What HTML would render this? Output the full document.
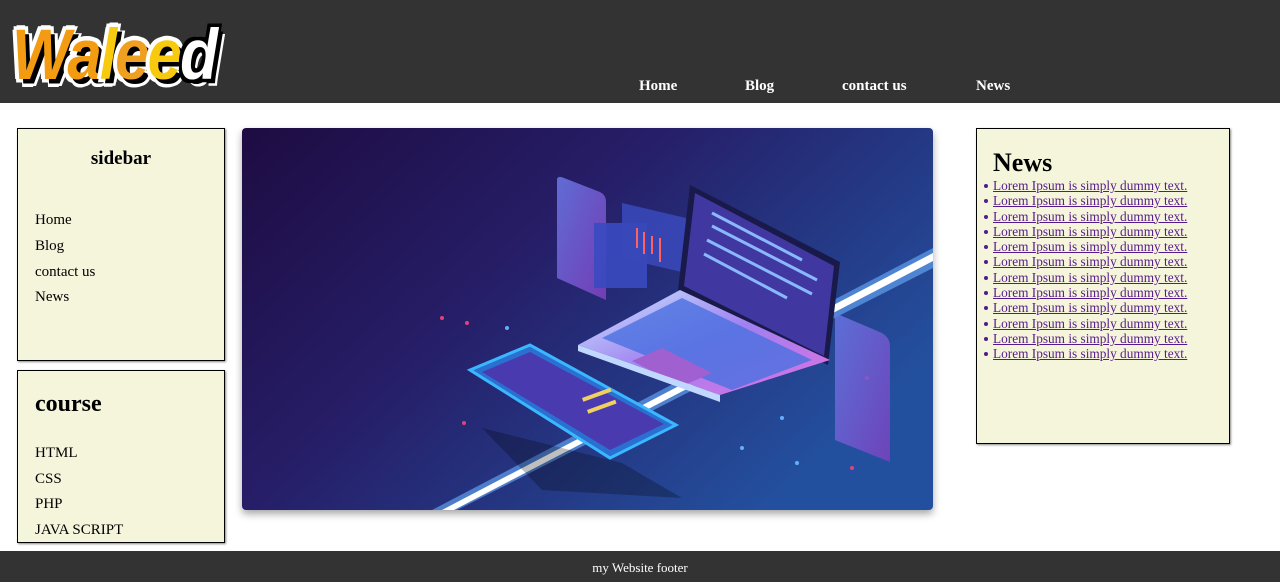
<!DOCTYPE html>
<html><head><meta charset="utf-8"><style>
*{margin:0;padding:0;box-sizing:border-box}
body{width:1280px;height:582px;position:relative;background:#fff;font-family:"Liberation Serif",serif;overflow:hidden}
.hdr{position:absolute;left:0;top:0;width:1280px;height:103px;background:#333}
.logo{position:absolute;left:12px;top:18px;font:900 62px/66px "Liberation Sans",sans-serif;letter-spacing:-2px;font-style:italic;transform:scaleY(1.15);transform-origin:0 0;white-space:nowrap}
.logo span{text-shadow:4px 4px 0 #000,-3px -3px 0 #fff,3px -3px 0 #fff,-3px 3px 0 #fff,6px 6px 0 #fff,0 -4px 0 #fff,-4px 0 0 #fff,7px 3px 0 #fff,3px 7px 0 #fff}
.nav a{position:absolute;top:78px;color:#fff;font-weight:bold;font-size:15px;text-decoration:none}
.box{position:absolute;background:#f5f5dc;border:1px solid #000;box-shadow:1px 1px 2px #888}
.box p{position:absolute;left:17px;font-size:15px;color:#000}
.img{position:absolute;left:242px;top:128px;width:691px;height:382px;border-radius:4px;overflow:hidden;box-shadow:0 4px 8px rgba(0,0,0,.35)}
ul{position:absolute;left:16px;top:49px;list-style:none}
li{font-size:13.3px;line-height:15.3px;color:#551a8b;text-decoration:underline;position:relative;white-space:nowrap}
li:before{content:"";position:absolute;left:-9px;top:6px;width:4px;height:4px;border-radius:50%;background:#551a8b}
.ftr{position:absolute;left:0;top:551px;width:1280px;height:31px;background:#333;color:#fff;font-size:13px;text-align:center;line-height:33px}
</style></head><body>
<div class="hdr">
<div class="logo"><span style="color:#f39c12">W</span><span style="color:#f39c12">a</span><span style="color:#f7c90f">l</span><span style="color:#f0a020">e</span><span style="color:#f7c90f">e</span><span style="color:#fff;text-shadow:4px 4px 0 #000,-3px -3px 0 #000,3px -3px 0 #000,-3px 3px 0 #000,6px 6px 0 #fff">d</span></div>
<div class="nav"><a style="left:639px">Home</a><a style="left:745px">Blog</a><a style="left:842px">contact us</a><a style="left:976px">News</a></div>
</div>
<div class="box" style="left:17px;top:128px;width:208px;height:233px">
<div style="position:absolute;left:0;width:100%;top:19px;text-align:center;font-weight:bold;font-size:19px">sidebar</div>
<p style="top:83px">Home</p><p style="top:109px">Blog</p><p style="top:135px">contact us</p><p style="top:160px">News</p>
</div>
<div class="box" style="left:17px;top:370px;width:208px;height:173px">
<div style="position:absolute;left:17px;top:20px;font-weight:bold;font-size:24px">course</div>
<p style="top:74px">HTML</p><p style="top:100px">CSS</p><p style="top:125px">PHP</p><p style="top:151px">JAVA SCRIPT</p>
</div>
<div class="img">
<svg width="691" height="382" viewBox="0 0 691 382">
<defs>
<linearGradient id="bg" x1="0" y1="0" x2="1" y2=".6"><stop offset="0" stop-color="#1e0c42"/><stop offset=".45" stop-color="#261e68"/><stop offset="1" stop-color="#23509e"/></linearGradient>
<linearGradient id="lp" x1="0" y1="0" x2="1" y2="1"><stop offset="0" stop-color="#c8e8ff"/><stop offset=".5" stop-color="#a080f0"/><stop offset="1" stop-color="#e070e0"/></linearGradient>
<linearGradient id="ph" x1="0" y1="0" x2="1" y2="1"><stop offset="0" stop-color="#6a7ae8"/><stop offset="1" stop-color="#8040c0"/></linearGradient>
</defs>
<rect width="691" height="382" fill="url(#bg)"/>
<path d="M190 382 L691 120 L691 140 L215 382Z" fill="#6ab0ff" opacity=".6"/>
<path d="M200 382 L691 125 L691 133 L212 382Z" fill="#fff"/>
<g fill="#e04080"><circle cx="200" cy="190" r="2"/><circle cx="225" cy="195" r="2"/><circle cx="222" cy="295" r="2"/><circle cx="330" cy="280" r="2"/><circle cx="625" cy="250" r="2"/><circle cx="610" cy="340" r="2"/></g>
<g fill="#60b0ff"><circle cx="265" cy="200" r="2"/><circle cx="500" cy="320" r="2"/><circle cx="540" cy="290" r="2"/><circle cx="555" cy="335" r="2"/></g>
<path d="M315 52 Q315 47 322 50 L358 64 Q364 67 364 74 L364 172 L315 150Z" fill="url(#ph)" opacity=".85"/>
<path d="M352 95 L405 95 L405 160 L352 160Z" fill="#3a4ac0" opacity=".9"/>
<path d="M380 75 L465 95 L465 150 L380 130Z" fill="#3848b8" opacity=".9"/>
<g stroke="#ff6060" stroke-width="2"><path d="M395 100 v20 M402 104 v22 M410 108 v18 M418 110 v24"/></g>
<path d="M448 57 L598 134 L586 237 L436 162Z" fill="#1a1a4a"/>
<path d="M453 65 L592 138 L582 228 L442 158Z" fill="#4038a0"/>
<g stroke="#8ab8ff" stroke-width="3"><path d="M470 85 L560 132 M470 98 L575 152 M465 112 L570 166 M462 126 L545 170"/></g>
<path d="M336 217 L438 162 L588 232 L478 267Z" fill="url(#lp)"/>
<path d="M360 210 L440 170 L570 232 L490 262Z" fill="#4a70e0" opacity=".8"/>
<path d="M390 233 L420 220 L470 245 L440 258Z" fill="#a060d0"/>
<path d="M336 217 L478 267 L478 274 L336 223Z" fill="#c0d8ff"/>
<path d="M593 185 L640 205 Q648 210 648 218 L648 334 L593 312Z" fill="url(#ph)" opacity=".8"/>
<path d="M240 300 L380 335 L440 370 L300 362Z" fill="#000" opacity=".25"/>
<path d="M228 242 L288 217 L434 297 L368 330Z" fill="#2a70d0" stroke="#3ab8ff" stroke-width="3"/>
<path d="M240 244 L288 224 L422 296 L368 322Z" fill="#4a3ab0"/>
<g fill="#f0d060"><rect x="340" y="270" width="30" height="4" transform="rotate(-20 340 270)"/><rect x="345" y="282" width="30" height="4" transform="rotate(-20 345 282)"/></g>
</svg>
</div>
<div class="box" style="left:976px;top:128px;width:254px;height:316px">
<div style="position:absolute;left:16px;top:19px;font-weight:bold;font-size:26px">News</div>
<ul>
<li>Lorem Ipsum is simply dummy text.</li><li>Lorem Ipsum is simply dummy text.</li><li>Lorem Ipsum is simply dummy text.</li><li>Lorem Ipsum is simply dummy text.</li><li>Lorem Ipsum is simply dummy text.</li><li>Lorem Ipsum is simply dummy text.</li><li>Lorem Ipsum is simply dummy text.</li><li>Lorem Ipsum is simply dummy text.</li><li>Lorem Ipsum is simply dummy text.</li><li>Lorem Ipsum is simply dummy text.</li><li>Lorem Ipsum is simply dummy text.</li><li>Lorem Ipsum is simply dummy text.</li>
</ul>
</div>
<div class="ftr">my Website footer</div>
</body></html>
